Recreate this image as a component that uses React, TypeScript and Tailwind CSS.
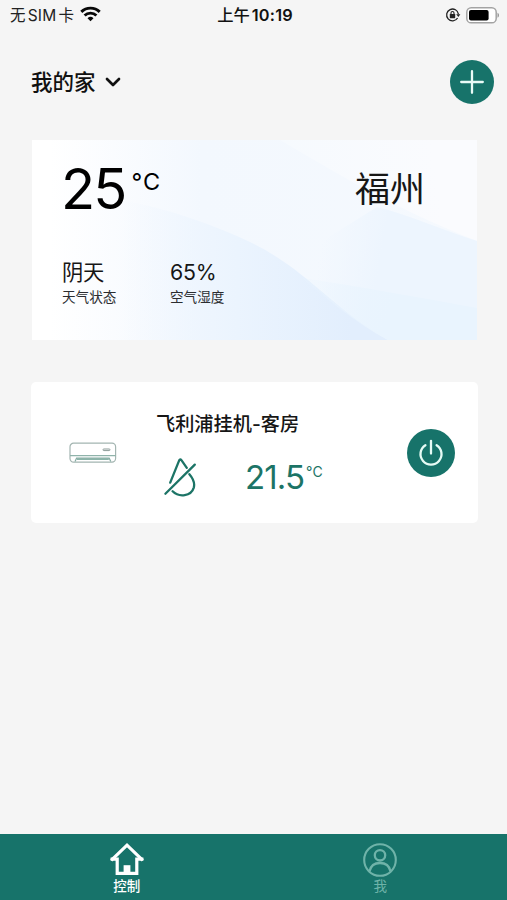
import React from "react";
import { ChevronDown } from "lucide-react";

const fontStack = "font-['Inter','Noto_Sans_CJK_SC',sans-serif]";

const WifiIcon = () => (
  <svg viewBox="0 0 21 16" className="w-[21px] h-4" fill="none" stroke="#080808" strokeWidth="2.9">
    <path d="M1.3 5.9a13.1 13.1 0 0 1 18.4 0" />
    <path d="M4.6 9.5a8.4 8.4 0 0 1 11.8 0" />
    <path d="M10.5 15.2l-3-3a4.3 4.3 0 0 1 6 0z" fill="#080808" stroke="none" />
  </svg>
);

const RotationLockIcon = () => (
  <svg viewBox="0 0 16 16" className="w-4 h-4" fill="none" stroke="#222" strokeWidth="1.3">
    <path d="M12.6 11A5.9 5.9 0 1 1 13.4 7.2" />
    <path d="M11.2 7.2h4.2l-2.1 2.8z" fill="#222" stroke="none" />
    <rect x="4.8" y="7" width="5.4" height="4.2" rx="0.6" fill="#222" stroke="none" />
    <path d="M6 7.2V6a1.5 1.5 0 0 1 3 0v1.2" strokeWidth="1.1" />
  </svg>
);

const BatteryIcon = () => (
  <svg viewBox="0 0 34 17" className="w-[34px] h-[17px]">
    <rect x="0.8" y="0.8" width="29.4" height="15" rx="4.4" fill="#fff" stroke="#a3a3a3" strokeWidth="1.5" />
    <rect x="3" y="3" width="19.6" height="10.6" rx="2" fill="#000" />
    <path d="M31.5 5.8c2 .8 2 4.2 0 5z" fill="#999" />
  </svg>
);

const AirConditionerIcon = () => (
  <svg viewBox="0 0 48 22" className="w-12 h-[22px]" fill="none" stroke="#a3b5b1" strokeWidth="1.2">
    <rect x="1" y="1.2" width="45.6" height="19" rx="3.6" />
    <path d="M1 13.6h45.6" stroke="#8fb3aa" />
    <path d="M6 19.6l1.6-3.4h32.6l1.6 3.4" stroke="#86aca3" />
    <path d="M8 17.2h31.8" stroke="#6fa294" />
    <rect x="34" y="7" width="7" height="1.6" rx="0.8" stroke="#8a9a97" strokeWidth="1" />
  </svg>
);

const DropOffIcon = () => (
  <svg
    viewBox="0 0 34 40"
    className="w-[34px] h-10"
    fill="none"
    stroke="#1c7466"
    strokeWidth="2.3"
    strokeLinecap="round"
    strokeLinejoin="round"
  >
    <path d="M7.2 25.6L16.2 3.4q1-1.8 2.2-.2l5.4 7.6" />
    <path d="M26.4 17.2c3.6 4.2 5.6 8.8 4.4 13.4-2.6 8.6-14.6 10.2-21.2 3.7" />
    <path d="M2.4 36.7L31.8 7.6" />
  </svg>
);

const PowerIcon = () => (
  <svg viewBox="0 0 26 28" className="w-[26px] h-7" fill="none" stroke="#e6fbf5" strokeWidth="2.3" strokeLinecap="round">
    <path d="M7.4 6.2a10.5 10.5 0 1 0 11.2 0" />
    <path d="M13 1.8v12.8" />
  </svg>
);

const HomeIcon = () => (
  <svg viewBox="0 0 36 34" className="w-9 h-[34px]" fill="none" stroke="#fff" strokeWidth="3.2">
    <path d="M2.2 18.3L18 3.2l15.8 15.1" />
    <path d="M1.6 17.2h6.6v14.1h19.6V17.2h6.6" />
    <rect x="14.6" y="23.2" width="6.8" height="8" fill="#fff" stroke="none" />
  </svg>
);

const UserIcon = () => (
  <svg viewBox="0 0 36 36" className="w-9 h-9" fill="none" stroke="#6fb3a9" strokeWidth="2.1">
    <circle cx="18" cy="18" r="15.8" />
    <circle cx="18" cy="13.3" r="5.2" strokeWidth="2.3" />
    <path d="M7.5 29.3c1.2-5.4 5.4-8.3 10.5-8.3s9.3 2.9 10.5 8.3" strokeWidth="2.3" />
  </svg>
);

const WeatherBackdrop = () => (
  <svg viewBox="0 0 445 200" preserveAspectRatio="none" className="absolute inset-0 w-full h-full">
    <defs>
      <linearGradient id="sky" x1="0" y1="0" x2="1" y2="0">
        <stop offset="0.04" stopColor="#ffffff" />
        <stop offset="0.38" stopColor="#f3f8fe" />
        <stop offset="1" stopColor="#f5f9fe" />
      </linearGradient>
      <linearGradient id="wave" gradientUnits="userSpaceOnUse" x1="90" y1="0" x2="320" y2="0">
        <stop offset="0" stopColor="#edf5fe" stopOpacity="0" />
        <stop offset="0.5" stopColor="#ebf4fe" />
        <stop offset="1" stopColor="#e2eefd" />
      </linearGradient>
      <linearGradient id="corner" gradientUnits="userSpaceOnUse" x1="250" y1="20" x2="400" y2="0">
        <stop offset="0" stopColor="#f6fafe" />
        <stop offset="1" stopColor="#fafbfe" />
      </linearGradient>
      <linearGradient id="band" gradientUnits="userSpaceOnUse" x1="290" y1="100" x2="350" y2="110">
        <stop offset="0" stopColor="#edf5fe" stopOpacity="0" />
        <stop offset="1" stopColor="#edf5fe" />
      </linearGradient>
      <linearGradient id="shore" gradientUnits="userSpaceOnUse" x1="290" y1="140" x2="360" y2="165">
        <stop offset="0" stopColor="#e9f4fe" stopOpacity="0.3" />
        <stop offset="1" stopColor="#e9f4fe" />
      </linearGradient>
    </defs>
    <rect width="445" height="200" fill="url(#sky)" />
    <path d="M248 0C300 30 350 63 445 101V0z" fill="url(#corner)" />
    <path d="M260 120L345 67C380 76 410 90 445 101V200H352C320 178 295 155 260 120z" fill="url(#band)" />
    <path d="M90 200V60C140 70 180 84 220 103C275 130 300 168 356 200z" fill="url(#wave)" />
    <path d="M270 138C330 147 390 158 445 168V200H356C320 181 295 158 270 138z" fill="url(#shore)" />
  </svg>
);

interface ReadingProps {
  value: string;
  label: string;
}

const Reading: React.FC<ReadingProps> = ({ value, label }) => (
  <div className="w-[108px]">
    <div className="text-[21.3px] leading-7 tracking-[-0.2px] text-[#161616]">{value}</div>
    <div className="text-[13.6px] leading-[22px] text-[#2b2d30]">{label}</div>
  </div>
);

export default function App() {
  return (
    <div className={`w-[507px] h-[900px] bg-[#f5f5f5] flex flex-col overflow-hidden whitespace-nowrap ${fontStack}`}>
      {/* Status bar */}
      <div className="h-[30px] grid grid-cols-[1fr_auto_1fr] items-center pl-[10px] pr-[7px] text-[#222]">
        <div className="flex items-center leading-none pt-px">
          <span className="tracking-[0.2px] text-[15.5px]">无<span className="ml-0.5">SIM</span><span className="ml-0.5">卡</span></span>
          <span className="ml-1.5 -mt-1"><WifiIcon /></span>
        </div>
        <div className="flex items-center text-[16.3px] font-medium leading-none text-[#111]">
          <span>上午</span>
          <span className="ml-[2px] font-semibold tracking-[0.2px]">10:19</span>
        </div>
        <div className="flex items-center justify-end gap-[5px]">
          <RotationLockIcon />
          <BatteryIcon />
        </div>
      </div>

      {/* Home picker */}
      <div className="h-[104px] flex items-center justify-between pl-[31px] pr-[13px]">
        <button className="flex items-center gap-[5px] text-[21.5px] font-medium leading-none text-[#111]">
          <span className="pt-0.5">我的家</span>
          <ChevronDown className="w-6 h-6" strokeWidth={2.7} />
        </button>
        <button className="w-[44px] h-[44px] rounded-full bg-[#17736a] flex items-center justify-center">
          <svg viewBox="0 0 24 24" className="w-6 h-6" stroke="#e9fbf7" strokeWidth="2.3" strokeLinecap="round">
            <path d="M12 1.2v21.6M1.2 12h21.6" />
          </svg>
        </button>
      </div>

      {/* Weather */}
      <section className="relative mt-[6px] ml-8 w-[445px] h-[200px] shrink-0 bg-white">
        <WeatherBackdrop />
        <div className="relative pl-[30px] pt-[18px]">
          <div className="flex h-[60px] pr-[52px] justify-between">
            <div className="flex items-start text-black">
              <span className="-ml-px text-[56px] leading-[62px] tracking-[-1.8px]">25</span>
              <span className="ml-[6px] mt-[9px] text-[23.5px] leading-[30px] tracking-[1px]">°C</span>
            </div>
            <span className="text-[35px] leading-[62px] text-[#161616]">福州</span>
          </div>
          <div className="flex mt-10">
            <Reading value="阴天" label="天气状态" />
            <Reading value="65%" label="空气湿度" />
          </div>
        </div>
      </section>

      {/* Device */}
      <section className="mt-[42px] ml-[31px] w-[447px] h-[141px] shrink-0 rounded-[5px] bg-white flex items-center pl-[38px] pr-[23px]">
        <AirConditionerIcon />
        <div className="ml-[39px] flex-1 h-full pt-7">
          <div className="text-[19.2px] leading-7 font-medium text-[#161616]">飞利浦挂机-客房</div>
          <div className="flex items-start mt-[19px] pl-[7px] text-[#1c7466]">
            <DropOffIcon />
            <span className="ml-[48px] text-[33px] leading-10 tracking-[-0.9px]">21.5</span>
            <span className="ml-0.5 mt-[5px] text-[14px] leading-5 tracking-[0.2px]">°C</span>
          </div>
        </div>
        <button className="w-[48px] h-[48px] rounded-full bg-[#17736a] flex items-center justify-center">
          <PowerIcon />
        </button>
      </section>

      {/* Tabs */}
      <nav className="mt-auto h-[66px] grid grid-cols-2 bg-[#17736a] text-[13.5px] leading-4">
        <div className="flex flex-col items-center pt-[8px] text-white">
          <HomeIcon />
          <span className="mt-[2px] font-medium">控制</span>
        </div>
        <div className="flex flex-col items-center pt-[8px] text-[#6fb3a9]">
          <UserIcon />
          <span>我</span>
        </div>
      </nav>
    </div>
  );
}
